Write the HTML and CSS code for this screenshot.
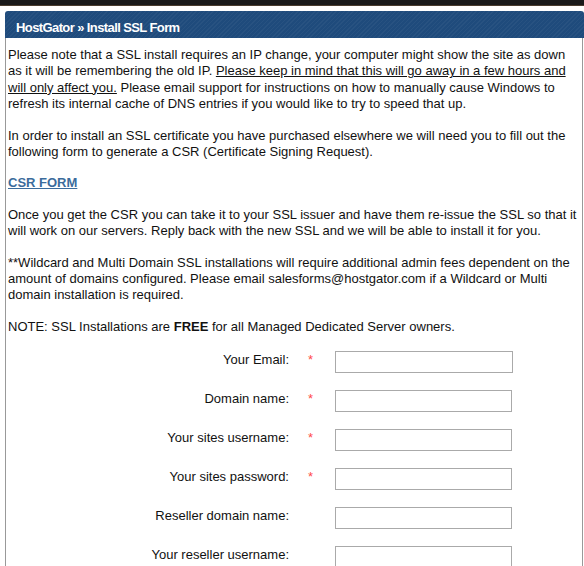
FILE: index.html
```html
<!DOCTYPE html>
<html lang="en">
<head>
  <meta charset="UTF-8" />
  <title>HostGator » Install SSL Form</title>
  <link rel="stylesheet" href="styles.css">
</head>
<body>

  <div class="topbar"></div>

  <div class="panel">
    <div class="panel-head">HostGator &raquo; Install SSL Form</div>

    <div class="panel-body">
      <p>
        Please note that a SSL install requires an IP change, your computer might show the site as down as it will be remembering the old IP. <u>Please keep in mind that this will go away in a few hours and will only affect you.</u> Please email support for instructions on how to manually cause Windows to refresh its internal cache of DNS entries if you would like to try to speed that up.
      </p>
      <p>
        In order to install an SSL certificate you have purchased elsewhere we will need you to fill out the following form to generate a CSR (Certificate Signing Request).
      </p>
      <p><a href="#" class="csr-link">CSR FORM</a></p>
      <p>
        Once you get the CSR you can take it to your SSL issuer and have them re-issue the SSL so that it will work on our servers. Reply back with the new SSL and we will be able to install it for you.
      </p>
      <p>
        **Wildcard and Multi Domain SSL installations will require additional admin fees dependent on the amount of domains configured. Please email salesforms@hostgator.com if a Wildcard or Multi domain installation is required.
      </p>
      <p>NOTE: SSL Installations are <b>FREE</b> for all Managed Dedicated Server owners.</p>

      <form class="ssl-form">
        <label>Your Email:</label>
        <span class="req">*</span>
        <input type="text" class="wide">

        <label>Domain name:</label>
        <span class="req">*</span>
        <input type="text">

        <label>Your sites username:</label>
        <span class="req">*</span>
        <input type="text">

        <label>Your sites password:</label>
        <span class="req">*</span>
        <input type="password">

        <label>Reseller domain name:</label>
        <span class="req"></span>
        <input type="text">

        <label>Your reseller username:</label>
        <span class="req"></span>
        <input type="text">
      </form>
    </div>
  </div>

</body>
</html>
```

FILE: styles.css
```css
body {
  margin: 0;
  padding: 0;
  font-family: Tahoma, 'Liberation Sans', sans-serif;
  font-size: 13px;
  color: #111;
  background: #fff;
  overflow: hidden;
}

.topbar {
  height: 5px;
  background: #1a1a1a;
  border-bottom: 1px solid #4a3c2e;
  margin-bottom: 5px;
}

.panel {
  margin-left: 5px;
}

.panel-head {
  height: 27px;
  line-height: 27px;
  padding: 3px 0 0 11px;
  box-sizing: border-box;
  color: #fff;
  font-weight: bold;
  font-size: 13px;
  letter-spacing: -0.6px;
  border-radius: 3px 3px 0 0;
  background-color: #1f4b7c;
  background-image: repeating-linear-gradient(135deg, rgba(255,255,255,0.04) 0 1px, transparent 1px 3px);
  overflow: hidden;
}

.panel-body {
  margin-right: 1px;
  border-left: 1px solid #999;
  border-right: 1px solid #999;
  padding: 9px 5px 20px 2px;
}

.panel-body p {
  margin: 0 0 15px;
  line-height: 16.4px;
}

.panel-body u {
  text-decoration: underline;
}

.csr-link {
  color: #3b6c9c;
  font-weight: bold;
  text-decoration: underline;
}

.ssl-form {
  display: grid;
  grid-template-columns: 281px 46px auto;
  row-gap: 17px;
  align-items: center;
  margin-top: 16px;
}

.ssl-form label {
  text-align: right;
  margin-top: -6px;
}

.req {
  color: #ff4a4a;
  padding-left: 19px;
  margin-top: -6px;
}

.ssl-form input {
  width: 177px;
  height: 22px;
  box-sizing: border-box;
  border: 1px solid #aaa;
  padding: 1px 3px;
  margin: 0;
}

.ssl-form input.wide {
  width: 178px;
}
```
